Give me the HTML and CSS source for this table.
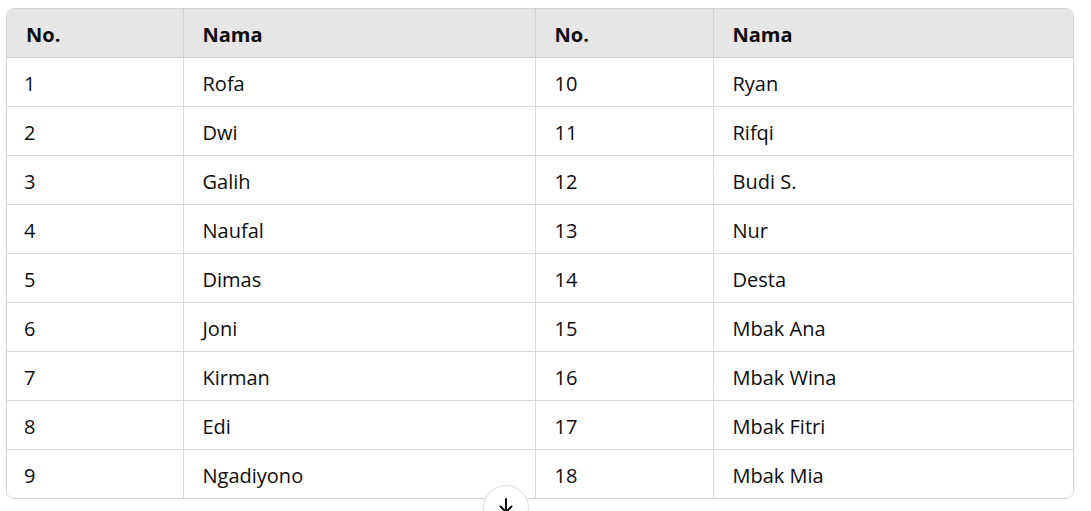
FILE: index.html
```html
<!DOCTYPE html>
<html>
<head>
<meta charset="utf-8">
<link rel="stylesheet" href="styles.css">
</head>
<body>
<div class="wrap">
  <div class="table-box">
    <table class="tbl">
      <colgroup>
        <col class="c1"><col class="c2"><col class="c3"><col class="c4">
      </colgroup>
      <thead>
        <tr><th>No.</th><th>Nama</th><th>No.</th><th>Nama</th></tr>
      </thead>
      <tbody>
        <tr><td>1</td><td>Rofa</td><td>10</td><td>Ryan</td></tr>
        <tr><td>2</td><td>Dwi</td><td>11</td><td>Rifqi</td></tr>
        <tr><td>3</td><td>Galih</td><td>12</td><td>Budi S.</td></tr>
        <tr><td>4</td><td>Naufal</td><td>13</td><td>Nur</td></tr>
        <tr><td>5</td><td>Dimas</td><td>14</td><td>Desta</td></tr>
        <tr><td>6</td><td>Joni</td><td>15</td><td>Mbak Ana</td></tr>
        <tr><td>7</td><td>Kirman</td><td>16</td><td>Mbak Wina</td></tr>
        <tr><td>8</td><td>Edi</td><td>17</td><td>Mbak Fitri</td></tr>
        <tr><td>9</td><td>Ngadiyono</td><td>18</td><td>Mbak Mia</td></tr>
      </tbody>
    </table>
  </div>
  <button class="scroll-btn" aria-label="Scroll down">
    <svg width="20" height="20" viewBox="0 0 20 20" fill="none" stroke="#0d0d0d" stroke-width="2" stroke-linecap="round" stroke-linejoin="round">
      <path d="M10 3v13"/><path d="M4.5 10.5L10 16l5.5-5.5"/>
    </svg>
  </button>
</div>
</body>
</html>
```

FILE: styles.css
```css
html, body {
  margin: 0;
  padding: 0;
  background: #ffffff;
  overflow: hidden;
}
body {
  font-family: "Open Sans", "Noto Sans", "DejaVu Sans", sans-serif;
  color: #0d0d0d;
  height: 511px;
}
.wrap {
  position: relative;
  padding: 8px 17px 0 6px;
}
.table-box {
  border: 1px solid #d4d4d4;
  border-radius: 8px;
  overflow: hidden;
}
.tbl {
  width: 100%;
  border-collapse: collapse;
  table-layout: fixed;
  font-size: 20px;
}
.c1 { width: 176px; }
.c2 { width: 352px; }
.c3 { width: 178px; }
.c4 { width: auto; }
.tbl th, .tbl td {
  height: 49px;
  padding: 3px 19px 0;
  text-align: left;
  border-left: 1px solid #d9d9d9;
  border-bottom: 1px solid #d9d9d9;
  box-sizing: border-box;
  white-space: nowrap;
}
.tbl td:first-child { padding-left: 17px; }
.tbl th:first-child, .tbl td:first-child { border-left: none; }
.tbl tbody tr:last-child td { border-bottom: none; }
.tbl th {
  height: 48px;
  background: #e6e6e6;
  font-weight: 700;
  border-bottom-color: #cfcfcf;
  border-left-color: #d0d0d0;
}
.scroll-btn {
  position: absolute;
  left: 483px;
  top: 485px;
  width: 46px;
  height: 46px;
  border-radius: 50%;
  background: #ffffff;
  border: 1px solid #dcdcdc;
  padding: 0;
  display: flex;
  align-items: flex-start;
  justify-content: center;
  padding-top: 10px;
  box-sizing: border-box;
}
```
